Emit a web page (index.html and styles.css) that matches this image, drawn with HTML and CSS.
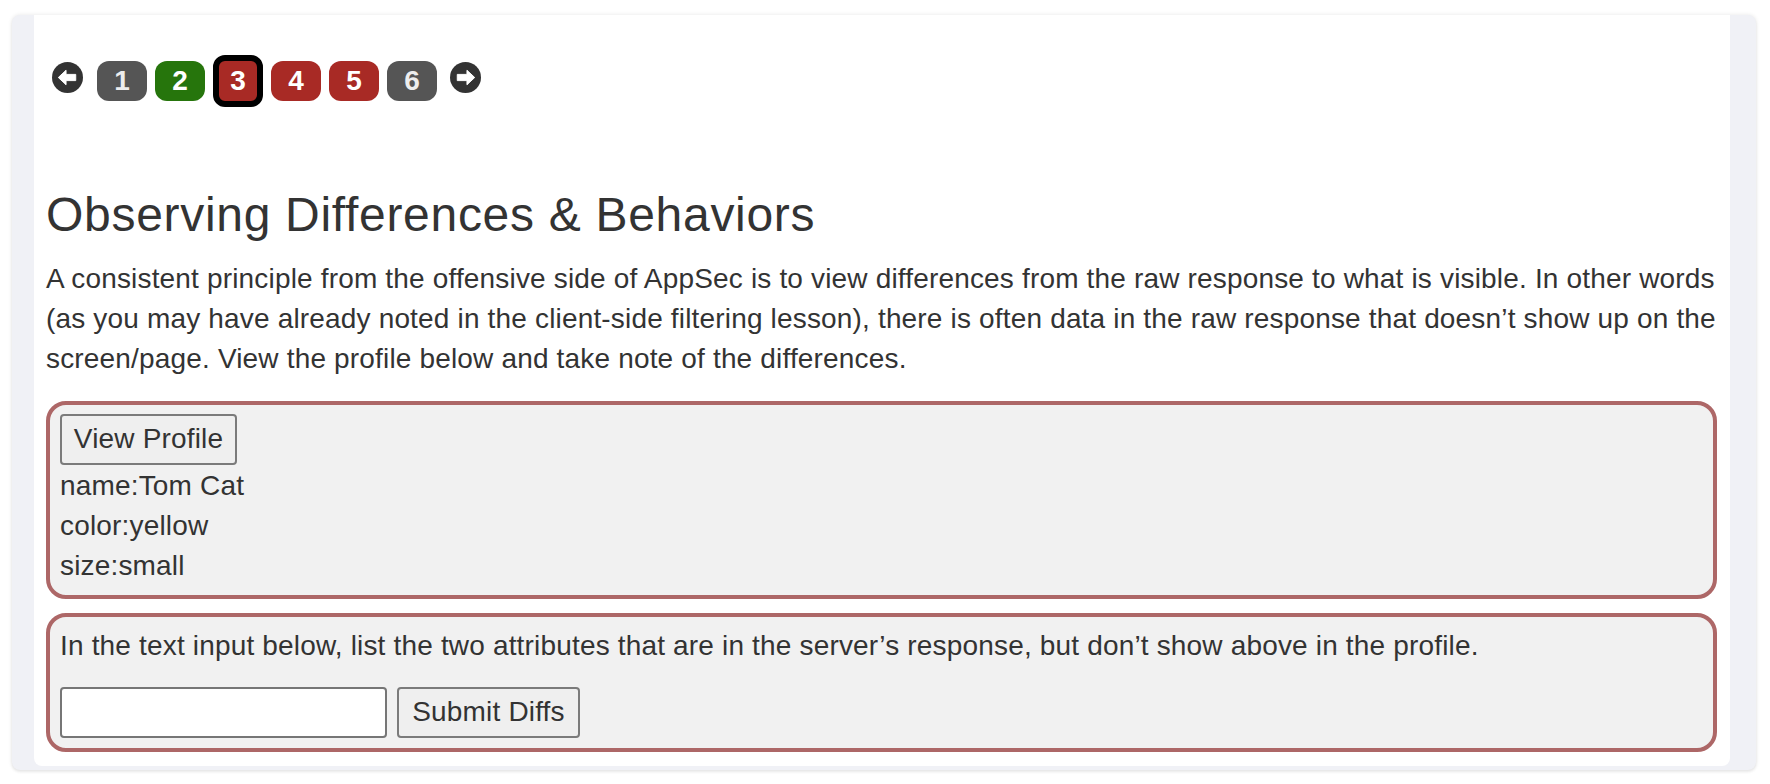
FILE: index.html
```html
<!DOCTYPE html>
<html lang="en">
<head>
<meta charset="utf-8">
<title>Observing Differences &amp; Behaviors</title>
<link rel="stylesheet" href="styles.css">
</head>
<body>
<div class="frame">
  <div class="card">
    <nav class="pager">
      <span class="arrow arrow-left">
        <svg viewBox="0 0 32 32" width="31" height="31"><circle cx="16" cy="16" r="16" fill="#333"/><path d="M6.5 16 L14.5 8.5 L14.5 12.8 L24.5 12.8 L24.5 19.2 L14.5 19.2 L14.5 23.5 Z" fill="#fff" stroke="#fff" stroke-width="1" stroke-linejoin="round"/></svg>
      </span>
      <span class="page grey">1</span>
      <span class="page green">2</span>
      <span class="page red current">3</span>
      <span class="page red">4</span>
      <span class="page red">5</span>
      <span class="page grey">6</span>
      <span class="arrow arrow-right">
        <svg viewBox="0 0 32 32" width="31" height="31"><circle cx="16" cy="16" r="16" fill="#333"/><path d="M25.5 16 L17.5 8.5 L17.5 12.8 L7.5 12.8 L7.5 19.2 L17.5 19.2 L17.5 23.5 Z" fill="#fff" stroke="#fff" stroke-width="1" stroke-linejoin="round"/></svg>
      </span>
    </nav>

    <h2 class="title">Observing Differences &amp; Behaviors</h2>
    <p class="intro">A consistent principle from the offensive side of AppSec is to view differences from the raw response to what is visible. In other words (as you may have already noted in the client-side filtering lesson), there is often data in the raw response that doesn’t show up on the screen/page. View the profile below and take note of the differences.</p>

    <div class="attack-box profile-box">
      <button class="btn btn-view" type="button">View Profile</button>
      <div class="line">name:Tom Cat</div>
      <div class="line">color:yellow</div>
      <div class="line">size:small</div>
    </div>

    <div class="attack-box diff-box">
      <div class="line">In the text input below, list the two attributes that are in the server’s response, but don’t show above in the profile.</div>
      <form class="diff-form">
        <input class="diff-input" type="text">
        <button class="btn btn-submit" type="button">Submit Diffs</button>
      </form>
    </div>
  </div>
</div>
</body>
</html>
```

FILE: styles.css
```css
html, body {
  margin: 0;
  padding: 0;
  background: #ffffff;
}

body {
  font-family: "Liberation Sans", Arial, Helvetica, sans-serif;
  color: #333333;
  height: 784px;
  overflow: hidden;
}

.frame {
  margin: 15px 14px 0 12px;
  height: 755px;
  box-sizing: border-box;
  padding: 0 26px 4px 22px;
  background: #f0f1f6;
  border-radius: 8px;
  box-shadow: 0 0 4px rgba(0, 0, 0, 0.10), 0 2px 3px rgba(0, 0, 0, 0.06);
}

.card {
  height: 751px;
  box-sizing: border-box;
  background: #ffffff;
  border-radius: 0 0 8px 8px;
  padding: 40px 13px 12px 12px;
}

.pager {
  display: flex;
  align-items: center;
  gap: 8px;
  height: 52px;
}

.arrow {
  display: block;
  width: 31px;
  height: 31px;
  margin-bottom: 7px;
}

.arrow svg {
  display: block;
}

.arrow-left {
  margin-left: 6px;
  margin-right: 6px;
}

.arrow-right {
  margin-left: 5px;
}

.page {
  display: flex;
  align-items: center;
  justify-content: center;
  width: 50px;
  height: 40px;
  box-sizing: border-box;
  border-radius: 12px;
  font-size: 28px;
  font-weight: bold;
  color: #ffffff;
}

.page.grey {
  background: #555555;
  color: #ededed;
}

.page.green {
  background: #26750c;
}

.page.red {
  background: #a82a25;
}

.page.current {
  height: 52px;
  border: 6px solid #000000;
  border-radius: 12px;
}

.title {
  margin: 82px 0 0 0;
  font-size: 48px;
  line-height: 52.8px;
  font-weight: normal;
  letter-spacing: 0.7px;
  color: #333333;
}

.intro {
  margin: 17px 0 0 0;
  font-size: 28px;
  line-height: 40px;
  letter-spacing: 0.17px;
}

.attack-box {
  border: 4px solid #ad6767;
  border-radius: 20px;
  background: #f1f1f1;
  padding: 9px 10px 9px 10px;
  font-size: 28px;
  line-height: 40px;
  letter-spacing: 0.17px;
}

.profile-box {
  margin-top: 22px;
}

.diff-box {
  margin-top: 14px;
  padding-bottom: 10px;
}

.btn {
  display: block;
  height: 51px;
  box-sizing: border-box;
  border: 2px solid #7b7b7b;
  border-radius: 4px;
  background: #efefef;
  font-family: "Liberation Sans", Arial, Helvetica, sans-serif;
  font-size: 28px;
  letter-spacing: 0.17px;
  color: #333333;
  padding: 0;
}

.btn-view {
  width: 177px;
  margin-bottom: 1px;
}

.btn-submit {
  width: 183px;
}

.diff-form {
  display: flex;
  gap: 10px;
  margin: 21px 0 0 0;
}

.diff-input {
  width: 327px;
  height: 51px;
  box-sizing: border-box;
  border: 2px solid #767676;
  border-radius: 4px;
  background: #ffffff;
  margin: 0;
  padding: 0 6px;
  font-size: 28px;
}
```
